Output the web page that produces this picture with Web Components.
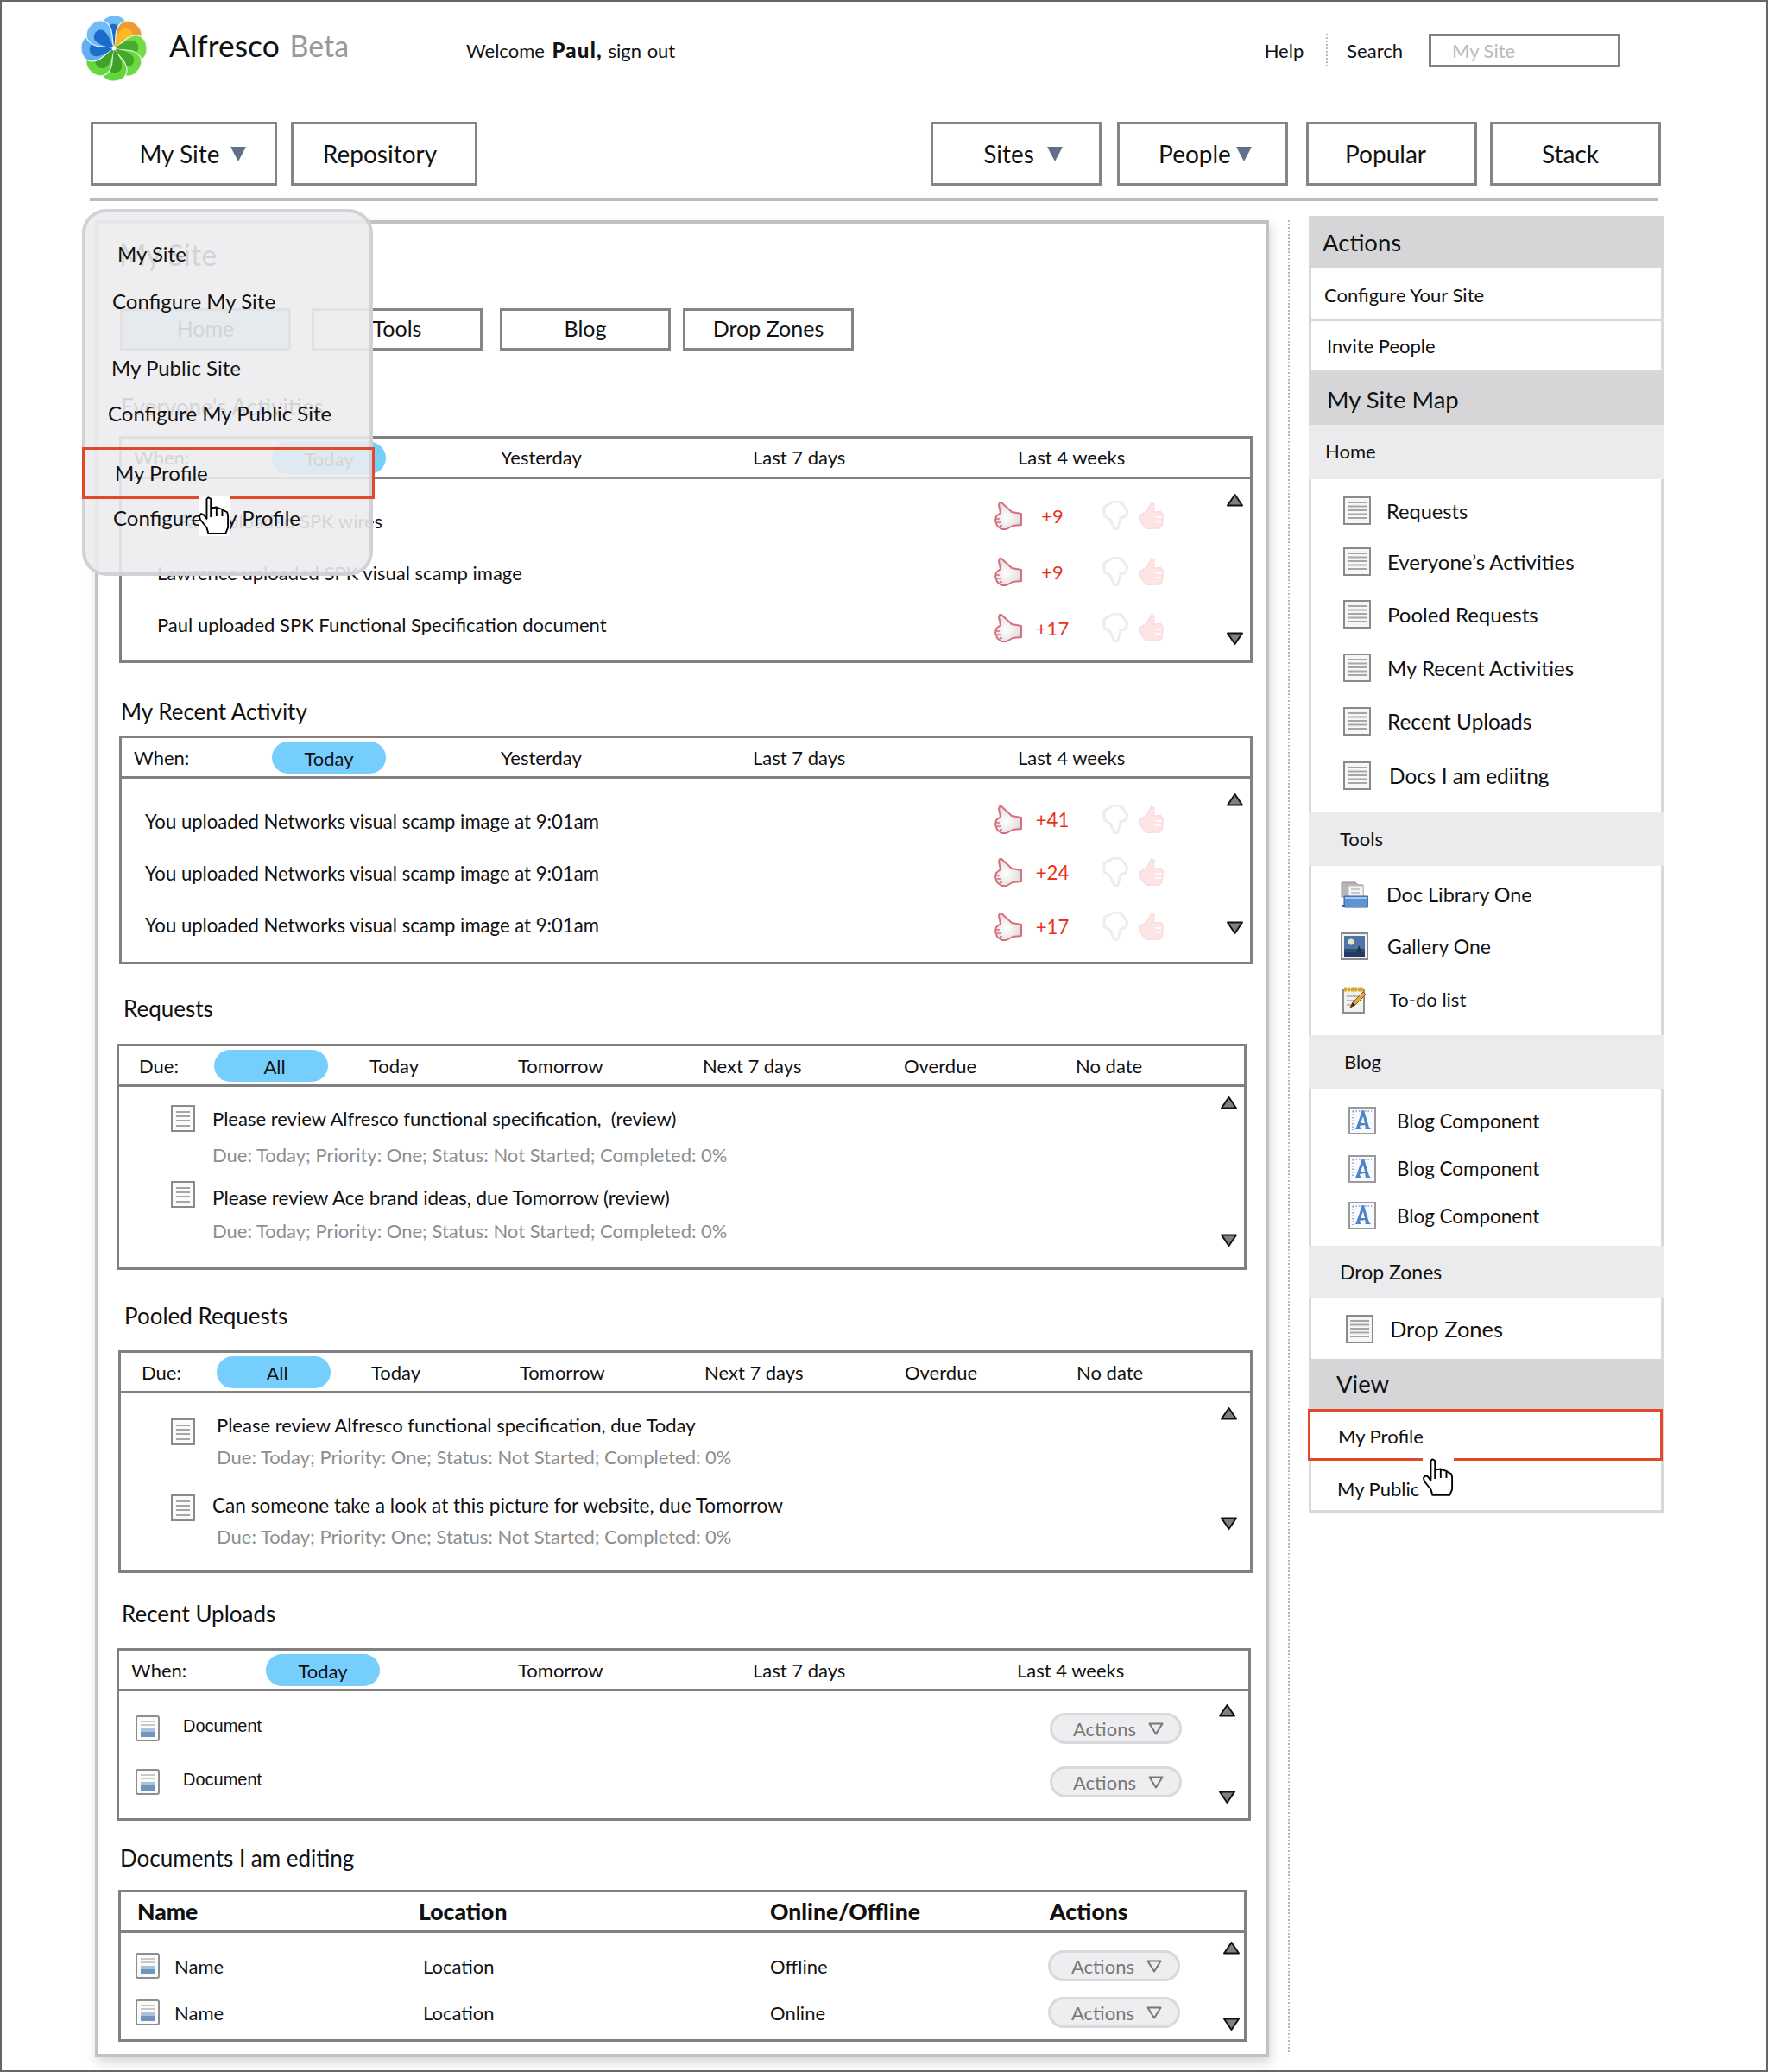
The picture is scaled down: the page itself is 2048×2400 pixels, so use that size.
<!DOCTYPE html>
<html>
<head>
<meta charset="utf-8">
<title>Alfresco My Site</title>
<style>
  html, body { margin: 0; background: #fff; }
  body { font-family: Lato, "Open Sans", sans-serif; font-size: 22px; color: #111; }
  .doc { font-family: "Liberation Sans", Arial, sans-serif; font-size: 20px; }
  .bold { font-weight: 900; font-size: 26.5px; }
</style>
</head>
<body>

<alfresco-page>
  <top-bar></top-bar>

  <main-nav>
    <nav-tab slot="left" label="My Site" arrow="12" shift="20" width="216"></nav-tab>
    <nav-tab slot="left" label="Repository" shift="-10" width="216"></nav-tab>
    <nav-tab slot="right" label="Sites" arrow="15" shift="16" width="198" style="margin-right:18px"></nav-tab>
    <nav-tab slot="right" label="People" arrow="6" shift="6" width="198" style="margin-right:21px"></nav-tab>
    <nav-tab slot="right" label="Popular" shift="-14" width="198" style="margin-right:15px"></nav-tab>
    <nav-tab slot="right" label="Stack" shift="-12" width="198"></nav-tab>
  </main-nav>

  <content-area>
    <main-panel>
      <section-title style="margin-top:16px;margin-left:24px;font-size:34px">My Site</section-title>

      <sub-tabs style="margin-top:42px;margin-left:25px">
        <sub-tab active>Home</sub-tab>
        <sub-tab>Tools</sub-tab>
        <sub-tab>Blog</sub-tab>
        <sub-tab>Drop Zones</sub-tab>
      </sub-tabs>

      <section-title style="margin-top:45px;margin-left:26px">Everyone's Activities</section-title>
      <list-box style="margin-top:14px;margin-left:24px;width:1313px;height:263px" arrows="16 17 8">
        <filter-bar slot="bar" label="When:" lift="2" pad="14" cols="160 265 292 307" items="Today|Yesterday|Last 7 days|Last 4 weeks"></filter-bar>
        <div style="height:18px"></div>
        <vote-row pad="64" vote-y="-12" score="+9">Paul uploaded SPK wires</vote-row>
        <vote-row pad="41" vote-y="-2" score="+9">Lawrence uploaded SPK visual scamp image</vote-row>
        <vote-row pad="41" vote-y="8" score="+17">Paul uploaded SPK Functional Specification document</vote-row>
      </list-box>

      <section-title style="margin-top:36px;margin-left:26px">My Recent Activity</section-title>
      <list-box style="margin-top:8px;margin-left:24px;width:1313px;height:265px" arrows="16 31 8">
        <filter-bar slot="bar" label="When:" pad="14" cols="160 265 292 307" items="Today|Yesterday|Last 7 days|Last 4 weeks"></filter-bar>
        <div style="height:19px"></div>
        <vote-row pad="27" vote-y="-4" score="+41" style="font-size:22.12px">You uploaded Networks visual scamp image at 9:01am</vote-row>
        <vote-row pad="27" vote-y="-2" score="+24" style="font-size:22.12px">You uploaded Networks visual scamp image at 9:01am</vote-row>
        <vote-row pad="27" vote-y="4" score="+17" style="font-size:22.12px">You uploaded Networks visual scamp image at 9:01am</vote-row>
      </list-box>

      <section-title style="margin-top:31px;margin-left:29px">Requests</section-title>
      <list-box style="margin-top:21px;margin-left:21px;width:1309px;height:262px" arrows="10 23 8">
        <filter-bar slot="bar" label="Due:" pad="23" cols="87 180 172 214 233 199" items="All|Today|Tomorrow|Next 7 days|Overdue|No date"></filter-bar>
        <div style="height:21px"></div>
        <task-row pad="60" title-top="-1" style="height:88px" meta="Due: Today; Priority: One; Status: Not Started; Completed: 0%">Please review Alfresco functional specification,&nbsp; (review)</task-row>
        <task-row pad="60" title-top="3" meta-top="0" style="height:88px;font-size:22.4px" meta="Due: Today; Priority: One; Status: Not Started; Completed: 0%">Please review Ace brand ideas, due Tomorrow (review)</task-row>
      </list-box>

      <section-title style="margin-top:33px;margin-left:30px">Pooled Requests</section-title>
      <list-box style="margin-top:20px;margin-left:23px;width:1314px;height:258px" arrows="15 46 15">
        <filter-bar slot="bar" label="Due:" pad="24" cols="87 179 172 214 232 199" items="All|Today|Tomorrow|Next 7 days|Overdue|No date"></filter-bar>
        <div style="height:29px"></div>
        <task-row pad="58" gap="25" title-top="-9" meta-top="-13" style="height:88px" meta="Due: Today; Priority: One; Status: Not Started; Completed: 0%">Please review Alfresco functional specification, due Today</task-row>
        <task-row pad="58" gap="20" meta-x="5" title-top="-4" meta-top="-9" style="height:88px;font-size:22.6px" meta="Due: Today; Priority: One; Status: Not Started; Completed: 0%">Can someone take a look at this picture for website, due Tomorrow</task-row>
      </list-box>

      <section-title style="margin-top:27px;margin-left:27px">Recent Uploads</section-title>
      <list-box style="margin-top:20px;margin-left:21px;width:1314px;height:200px" arrows="14 16 15">
        <filter-bar slot="bar" label="When:" pad="14" cols="156 292 272 306" items="Today|Tomorrow|Last 7 days|Last 4 weeks"></filter-bar>
        <div style="height:25px"></div>
        <table-line pad="19" cols="55 1004 160" style="height:36px;margin-bottom:26px">
          <ui-icon name="thumb"></ui-icon><span class="doc" style="margin-top:-6px">Document</span><action-pill></action-pill>
        </table-line>
        <table-line pad="19" cols="55 1004 160" style="height:36px">
          <ui-icon name="thumb"></ui-icon><span class="doc" style="margin-top:-6px">Document</span><action-pill></action-pill>
        </table-line>
      </list-box>

      <section-title style="margin-top:23px;margin-left:25px">Documents I am editing</section-title>
      <list-box style="margin-top:17px;margin-left:23px;width:1307px;height:176px" arrows="9 9 5">
        <table-line slot="bar" pad="19" cols="326 407 324 160" style="height:47px;border-bottom:3px solid #808080">
          <span class="bold">Name</span><span class="bold">Location</span><span class="bold">Online/Offline</span><span class="bold">Actions</span>
        </table-line>
        <div style="height:20px"></div>
        <table-line pad="17" cols="45 288 402 322 160" style="height:36px;margin-bottom:18px">
          <ui-icon name="thumb"></ui-icon><span>Name</span><span>Location</span><span>Offline</span><action-pill></action-pill>
        </table-line>
        <table-line pad="17" cols="45 288 402 322 160" style="height:36px">
          <ui-icon name="thumb"></ui-icon><span>Name</span><span>Location</span><span>Online</span><action-pill></action-pill>
        </table-line>
      </list-box>
    </main-panel>

    <side-panel>
      <side-head pad="16">Actions</side-head>
      <side-link pad="18" line style="height:62px;padding-top:4px">Configure Your Site</side-link>
      <side-link pad="21" line style="height:60px">Invite People</side-link>
      <side-head pad="21">My Site Map</side-head>
      <side-sub pad="19" style="height:63px">Home</side-sub>
      <div style="height:8px"></div>
      <side-link pad="40" icon="page" gap="18" style="height:57px;font-size:23.6px">Requests</side-link>
      <side-link pad="40" icon="page" gap="19" style="height:60px;font-size:24px">Everyone’s Activities</side-link>
      <side-link pad="40" icon="page" gap="19" style="height:62px;font-size:24px">Pooled Requests</side-link>
      <side-link pad="40" icon="page" gap="19" style="height:62px;font-size:24px">My Recent Activities</side-link>
      <side-link pad="40" icon="page" gap="19" style="height:63px;font-size:24.4px">Recent Uploads</side-link>
      <side-link pad="40" icon="page" gap="21" style="height:62px;font-size:24.4px">Docs I am ediitng</side-link>
      <div style="height:12px"></div>
      <side-sub pad="36" style="height:62px">Tools</side-sub>
      <div style="height:4px"></div>
      <side-link pad="37" icon="folder" gap="21" style="height:58px;font-size:23.4px">Doc Library One</side-link>
      <side-link pad="37" icon="gallery" gap="22" style="height:61px;font-size:23px">Gallery One</side-link>
      <side-link pad="39" icon="todo" gap="26" style="height:63px">To-do list</side-link>
      <div style="height:10px"></div>
      <side-sub pad="41" style="height:62px">Blog</side-sub>
      <div style="height:9px"></div>
      <side-link pad="46" icon="blog" gap="24" style="height:56px;font-size:22.4px">Blog Component</side-link>
      <side-link pad="46" icon="blog" gap="24" style="height:55px;font-size:22.4px">Blog Component</side-link>
      <side-link pad="46" icon="blog" gap="24" style="height:54px;font-size:22.4px">Blog Component</side-link>
      <div style="height:8px"></div>
      <side-sub pad="36" style="height:61px;font-size:23px">Drop Zones</side-sub>
      <side-link pad="43" icon="page" gap="19" style="height:70px;font-size:25.5px">Drop Zones</side-link>
      <side-head pad="32" style="height:58px;padding-bottom:2px">View</side-head>
      <side-link pad="29" hot style="height:60px;padding-top:2px">My Profile</side-link>
      <side-link pad="33" line style="height:60px;padding-top:8px">My Public</side-link>
    </side-panel>
  </content-area>

  <site-menu></site-menu>
  <hand-cursor style="left:228px;top:572px"></hand-cursor>
  <hand-cursor style="left:1646px;top:1686px"></hand-cursor>
</alfresco-page>

<script>
  // every small picture on the page lives here, drawn on a 1:1 pixel grid
  const ICONS = {
    page: [32, 33, `<rect x="1" y="1" width="30" height="31" fill="#f6f6f6" stroke="#8a8a8a" stroke-width="2"/>
      <path d="M5 7h22M5 11.500h22M5 16h22M5 20.500h22M5 25h22" stroke="#a6a6a6" stroke-width="2"/>`],
    task: [28, 31, `<rect x="1" y="1" width="26" height="29" fill="#fafafa" stroke="#8a8a8a" stroke-width="2"/>
      <path d="M6 8h16M6 13h16M6 18h16M6 24h16" stroke="#a6a6a6" stroke-width="2"/>`],
    thumb: [28, 30, `<rect x="1" y="1" width="26" height="28" rx="2" fill="#fbfbfb" stroke="#8d8d8d" stroke-width="2"/>
      <path d="M6 7h16M6 11h16" stroke="#c8c8c8" stroke-width="2"/>
      <rect x="6" y="15" width="16" height="10" fill="#6f94bd"/><rect x="6" y="15" width="16" height="4" fill="#a9c2dc"/>`],
    folder: [32, 32, `<path d="M1 2h16l3 3h6v14H1z" fill="#b5b5b5" stroke="#8a8a8a"/>
      <rect x="9" y="6" width="17" height="14" fill="#f3f3f3" stroke="#c4c4c4"/>
      <path d="M12 10h10M12 14h10" stroke="#c9c9c9" stroke-width="2"/>
      <rect x="4" y="18" width="28" height="13" rx="1" fill="#5f93d2" stroke="#2f5f9f"/>
      <path d="M5 20h26" stroke="#a8c8ee" stroke-width="2"/><rect x="1" y="28" width="4" height="3" fill="#2f5f9f"/>`],
    gallery: [32, 32, `<rect x="1" y="1" width="30" height="30" fill="#f2f2f2" stroke="#8a8a8a" stroke-width="2"/>
      <rect x="4" y="4" width="24" height="24" fill="#2f4a78"/><rect x="4" y="4" width="24" height="15" fill="#4e75a6"/>
      <circle cx="12" cy="11" r="3.500" fill="#dfeac4"/><path d="M18 24l3-9 4 9z" fill="#27303f"/>
      <rect x="4" y="23" width="24" height="5" fill="#223a63"/>`],
    todo: [28, 32, `<rect x="1" y="4" width="24" height="27" fill="#f1f1ee" stroke="#8f8f8f" stroke-width="2"/>
      <path d="M5 12h16M5 17h12M5 22h8" stroke="#bdbdbd" stroke-width="2"/>
      <path d="M2 4h22" stroke="#d8ad22" stroke-width="5" stroke-dasharray="3 1"/>
      <path d="M9 25l3-6 12-12 3 3-12 12z" fill="#e2a93c" stroke="#8a5a1c"/><path d="M9 25l3-6 3 3z" fill="#3a2a18"/>`],
    blog: [32, 32, `<rect x="1" y="1" width="30" height="30" fill="#f7f9fc" stroke="#9a9a9a" stroke-width="2"/>
      <path d="M5 5h22M5 5v22" stroke="#7f9cc4" stroke-width="1.500" stroke-dasharray="1.500 2"/>
      <path d="M8 26h7l-1-1-1-3 6-1 1 4-1 1h7l-2-2-6-20h-2L9 24zM14 19l3-8 2 8z" fill="#4f83c8" fill-rule="evenodd"/>`],
    vote: [32, 33, `<defs><radialGradient id="g" cx=".42" cy=".55" r=".6"><stop offset="0" stop-color="#fff"/><stop offset="1" stop-color="#dcdcdc"/></radialGradient></defs>
      <path d="M6 1L8 1L20 12L31 14V27L21 28L14 32H8L3 28L1 22L2 17L7 13L5 4Z" fill="url(#g)" stroke="#d96f7c" stroke-width="2" stroke-linejoin="round"/>
      <path d="M2 20h4M3 24h4M6 28h3" stroke="#d96f7c" stroke-width="1.500"/>`],
    down: [31, 34, `<path d="M3 7l11-6h8l8 11-2 6-6 2-3 12-4 1-5-11-7-5z" fill="#fff" stroke="#ececf1" stroke-width="3" stroke-linejoin="round"/>`],
    up: [30, 33, `<path d="M16 1l3 2-1 9h9l2 4-1 12-4 3H10l-8-9v-6l8-4z" fill="#fde5e5" stroke="#fcdede" stroke-width="2" stroke-linejoin="round"/>
      <path d="M20 18h8M20 23h7" stroke="#fff" stroke-width="1.500"/>`],
    'arrow-up': [19, 16, `<path d="M9.500 2L18 14.500H1z" fill="#808080" stroke="#111" stroke-width="2" stroke-linejoin="round"/>`],
    'arrow-down': [19, 16, `<path d="M9.500 14L18 1.500H1z" fill="#808080" stroke="#111" stroke-width="2" stroke-linejoin="round"/>`],
    'nav-arrow': [18, 17, `<path d="M0 0h18L9 17z" fill="#5f7189"/>`],
    'pill-arrow': [18, 15, `<path d="M1.500 1.500h15L9 13.500z" fill="none" stroke="#777" stroke-width="2" stroke-linejoin="round"/>`]
  }

  function drawIcon (name) {
    const [w, h, body] = ICONS[name]
    return `<svg width="${w}" height="${h}" viewBox="0 0 ${w} ${h}" style="display:block">${body}</svg>`
  }

  class UiIcon extends HTMLElement {
    constructor () {
      super()
      this.shadow = this.attachShadow({ mode: 'open' })
    }

    connectedCallback () {
      this.shadow.innerHTML = `<style>:host{display:block;flex:none}</style>${drawIcon(this.getAttribute('name'))}`
    }
  }

  class AlfrescoPage extends HTMLElement {
    constructor () {
      super()
      this.attachShadow({ mode: 'open' }).innerHTML = `
        <style>
          :host {
            display: block;
            position: relative;
            box-sizing: border-box;
            width: 2048px;
            height: 2400px;
            border: 2px solid #666;
            overflow: hidden;
          }
        </style>
        <slot></slot>`
    }
  }

  class FlowerLogo extends HTMLElement {
    constructor () {
      super()
      const petals = [
        [0, '#6fbcf7', '#1a6ccb'], [45, '#f09a34', '#fdb823'], [90, '#74dc44', '#46ad2c'], [135, '#6cd940', '#44a82b'],
        [180, '#64d53a', '#3da029'], [225, '#66d63c', '#3da12a'], [270, '#62aff2', '#1c6ecb'], [315, '#70baf7', '#1a6ccb']
      ]
      const paths = petals.map(([turn, light, dark]) => `
        <g transform="rotate(${turn})">
          <path d="M0 0C-3-8-15-14-15-25C-15-34-7-38 1-38C10-38 16-31 15-24C14-14 4-8 0 0Z" fill="${light}" stroke="#eef6f6" stroke-width="1.200"/>
          <path d="M0 0C-5-8-10-15-9-22C-8-27-3-29 1-28C5-27 7-23 6-18C5-11 2-6 0 0Z" fill="${dark}"/>
        </g>`).join('')
      this.attachShadow({ mode: 'open' }).innerHTML = `
        <style>:host{display:block;flex:none;width:80px;height:80px;margin:-4px 0 0 -1px}</style>
        <svg width="80" height="80" viewBox="-40 -40 80 80">${paths}<circle r="2.500" fill="#fff"/></svg>`
    }
  }

  class TopBar extends HTMLElement {
    constructor () {
      super()
      this.attachShadow({ mode: 'open' }).innerHTML = `
        <style>
          :host { display: flex; align-items: center; height: 112px; padding: 0 169px 0 91px; }
          .brand { display: flex; align-items: center; flex: none; width: 368px; }
          .name { margin-left: 24px; font-size: 35.5px; color: #111; white-space: nowrap; margin-top: -12px; }
          .name b { font-weight: 400; font-size: 34px; color: #999; margin-left: 3px; }
          .welcome { white-space: nowrap; margin-top: -2px; word-spacing: 1px; }
          .welcome strong { font-weight: 900; font-size: 24px; letter-spacing: 1.2px; margin: 0 0 0 2px; }
          .tools { margin-left: auto; display: flex; align-items: center; }
          .sep { width: 0; height: 38px; border-left: 2px dotted #bbb; margin: 0 22px 0 26px; }
          .field {
            box-sizing: border-box; width: 222px; height: 39px; margin-left: 30px;
            border: 3px solid #808080; padding: 0 24px; line-height: 33px; color: #bbb;
          }
        </style>
        <flower-logo></flower-logo>
        <div class="brand"><div class="name">Alfresco<b> Beta</b></div></div>
        <div class="welcome">Welcome <strong>Paul,</strong> sign out</div>
        <div class="tools">
          <span>Help</span><span class="sep"></span><span>Search</span>
          <div class="field">My Site</div>
        </div>`
    }
  }

  class MainNav extends HTMLElement {
    constructor () {
      super()
      this.attachShadow({ mode: 'open' }).innerHTML = `
        <style>
          :host { display: block; margin-top: 27px; padding: 0 0 0 103px; width: 1820px; }
          .tabs { display: flex; justify-content: space-between; }
          .group { display: flex; gap: 16px; }
          .group.right { gap: 0; margin-right: 1px; }
          .rule { height: 4px; background: #bcbcbc; margin: 14px 4px 0 -1px; }
        </style>
        <div class="tabs">
          <div class="group"><slot name="left"></slot></div>
          <div class="group right"><slot name="right"></slot></div>
        </div>
        <div class="rule"></div>`
    }
  }

  class NavTab extends HTMLElement {
    constructor () {
      super()
      this.shadow = this.attachShadow({ mode: 'open' })
    }

    connectedCallback () {
      const shift = Number(this.getAttribute('shift')) || 0
      const arrow = this.getAttribute('arrow')
      this.shadow.innerHTML = `
        <style>
          :host {
            display: flex; align-items: center; justify-content: center; box-sizing: border-box;
            width: ${this.getAttribute('width')}px; height: 74px; border: 3px solid #858585;
            font-size: 28px; padding-left: ${Math.max(shift, 0)}px; padding-right: ${Math.max(-shift, 0)}px;
          }
          span { white-space: nowrap; }
          svg { margin-left: ${arrow || 0}px; }
        </style>
        <span>${this.getAttribute('label')}</span>${arrow ? drawIcon('nav-arrow') : ''}`
    }
  }

  class ContentArea extends HTMLElement {
    constructor () {
      super()
      this.attachShadow({ mode: 'open' }).innerHTML = `
        <style>
          :host { display: flex; align-items: flex-start; margin-top: 17px; padding-left: 108px; position: relative; }
          .divider { width: 0; height: 2122px; margin: 5px 22px 0 22px; border-left: 2px dotted #b5b5b5; flex: none; }
          slot[name="side"] { display: block; }
        </style>
        <slot name="main"></slot>
        <div class="divider"></div>
        <slot name="side"></slot>`
      this.querySelector('main-panel').slot = 'main'
      this.querySelector('side-panel').slot = 'side'
    }
  }

  class MainPanel extends HTMLElement {
    constructor () {
      super()
      this.attachShadow({ mode: 'open' }).innerHTML = `
        <style>
          :host {
            display: block; box-sizing: border-box; flex: none; margin-top: 5px;
            width: 1360px; height: 2128px; border: 4px solid #c2c2c4;
            box-shadow: 2px 6px 12px rgba(0, 0, 0, .16);
            background: #fff;
          }
        </style>
        <slot></slot>`
    }
  }

  class SectionTitle extends HTMLElement {
    constructor () {
      super()
      this.attachShadow({ mode: 'open' }).innerHTML = `
        <style>:host { display: block; height: 40px; line-height: 40px; font-size: 26px; white-space: nowrap; }</style>
        <slot></slot>`
    }
  }

  class SubTabs extends HTMLElement {
    constructor () {
      super()
      this.attachShadow({ mode: 'open' }).innerHTML = `
        <style>:host { display: flex; gap: 24px; } ::slotted(:nth-child(3)) { margin-left: -4px; } ::slotted(:nth-child(4)) { margin-left: -10px; }</style>
        <slot></slot>`
    }
  }

  class SubTab extends HTMLElement {
    constructor () {
      super()
      this.attachShadow({ mode: 'open' }).innerHTML = `
        <style>
          :host {
            display: flex; align-items: center; justify-content: center; box-sizing: border-box;
            width: 198px; height: 49px; border: 3px solid #858585; font-size: 25px; padding-bottom: 3px;
          }
          :host([active]) { background: #a8d8f2; }
        </style>
        <slot></slot>`
    }
  }

  class ListBox extends HTMLElement {
    constructor () {
      super()
      this.shadow = this.attachShadow({ mode: 'open' })
    }

    connectedCallback () {
      const [top, bottom, right] = this.getAttribute('arrows').split(' ')
      this.shadow.innerHTML = `
        <style>
          :host {
            display: flex; flex-direction: column; box-sizing: border-box;
            border: 3px solid #808080; background: #fff;
          }
          .body { flex: 1; display: flex; min-height: 0; }
          .rows { flex: 1; min-width: 0; }
          .arrows {
            flex: none; display: flex; flex-direction: column; justify-content: space-between;
            padding: ${top}px ${right}px ${bottom}px 0;
          }
        </style>
        <slot name="bar"></slot>
        <div class="body">
          <div class="rows"><slot></slot></div>
          <div class="arrows">${drawIcon('arrow-up')}${drawIcon('arrow-down')}</div>
        </div>`
    }
  }

  class FilterBar extends HTMLElement {
    constructor () {
      super()
      this.shadow = this.attachShadow({ mode: 'open' })
    }

    connectedCallback () {
      const cols = this.getAttribute('cols').split(' ').map(c => c + 'px').join(' ')
      const items = this.getAttribute('items').split('|')
      this.shadow.innerHTML = `
        <style>
          :host {
            display: grid; align-items: center; box-sizing: border-box; height: 47px; flex: none;
            border-bottom: 3px solid #808080; padding-left: ${this.getAttribute('pad')}px;
            grid-template-columns: ${cols} auto;
          }
          span { white-space: nowrap; margin-top: -${this.getAttribute('lift') || 0}px; }
          .pill {
            box-sizing: border-box; width: 132px; height: 37px; line-height: 39px; text-align: center; margin-top: 0;
            background: #75cefc; border-radius: 19px;
          }
          .short { padding-left: 8px; }
        </style>
        <span>${this.getAttribute('label')}</span>
        ${items.map((item, i) => `<span class="${i === 0 ? 'pill' : ''} ${i === 0 && item.length < 4 ? 'short' : ''}">${item}</span>`).join('')}`
    }
  }

  class VoteRow extends HTMLElement {
    constructor () {
      super()
      this.shadow = this.attachShadow({ mode: 'open' })
    }

    connectedCallback () {
      this.shadow.innerHTML = `
        <style>
          :host {
            display: flex; align-items: center; box-sizing: border-box; height: 60px;
            padding: 0 73px 0 ${this.getAttribute('pad')}px;
          }
          .text { flex: 1; white-space: nowrap; }
          .score { width: 58px; margin-left: 6px; text-align: center; color: #e8321a; }
          .no { margin-left: 28px; }
          .yes { margin-left: 11px; filter: blur(.5px); }
          .votes { display: flex; align-items: center; margin-top: ${this.getAttribute('vote-y') || 0}px; }
        </style>
        <div class="text"><slot></slot></div>
        <div class="votes">
          ${drawIcon('vote')}<div class="score">${this.getAttribute('score')}</div>
          <div class="no">${drawIcon('down')}</div><div class="yes">${drawIcon('up')}</div>
        </div>`
    }
  }

  class TaskRow extends HTMLElement {
    constructor () {
      super()
      this.shadow = this.attachShadow({ mode: 'open' })
    }

    connectedCallback () {
      const gap = this.getAttribute('gap') || 20
      const titleTop = this.getAttribute('title-top') || 0
      const metaTop = this.getAttribute('meta-top') || 0
      const metaX = this.getAttribute('meta-x') || 0
      this.shadow.innerHTML = `
        <style>
          :host { display: block; box-sizing: border-box; padding-left: ${this.getAttribute('pad')}px; }
          .line { display: flex; gap: ${gap}px; height: 34px; }
          .title { white-space: nowrap; line-height: 34px; margin-top: ${titleTop}px; }
          .meta {
            margin: ${8 + Number(metaTop)}px 0 0 ${Number(gap) + 28 + Number(metaX)}px;
            font-size: 22px; line-height: 32px; color: #8e8e8e; white-space: nowrap;
          }
        </style>
        <div class="line">${drawIcon('task')}<div class="title"><slot></slot></div></div>
        <div class="meta">${this.getAttribute('meta')}</div>`
    }
  }

  class TableLine extends HTMLElement {
    constructor () {
      super()
      this.shadow = this.attachShadow({ mode: 'open' })
    }

    connectedCallback () {
      const cols = this.getAttribute('cols').split(' ').map(c => c + 'px').join(' ')
      this.shadow.innerHTML = `
        <style>
          :host {
            display: grid; align-items: center; box-sizing: border-box; flex: none;
            padding-left: ${this.getAttribute('pad')}px; grid-template-columns: ${cols};
          }
          ::slotted(span) { white-space: nowrap; }
        </style>
        <slot></slot>`
    }
  }

  class ActionPill extends HTMLElement {
    constructor () {
      super()
      this.attachShadow({ mode: 'open' }).innerHTML = `
        <style>
          :host {
            display: flex; align-items: center; box-sizing: border-box; width: 153px; height: 36px;
            padding-left: 24px; border: 3px solid #d9d9dd; border-radius: 18px;
            background: #eeeef0; color: #777;
          }
          svg { margin-left: 14px; }
        </style>
        <span>Actions</span>${drawIcon('pill-arrow')}`
    }
  }

  class SidePanel extends HTMLElement {
    constructor () {
      super()
      this.attachShadow({ mode: 'open' }).innerHTML = `
        <style>
          :host {
            display: block; width: 411px; flex: none; box-sizing: border-box;
            background:
              linear-gradient(#d8d8da, #d8d8da) left top / 3px 100% no-repeat,
              linear-gradient(#d8d8da, #d8d8da) right top / 3px 100% no-repeat;
          }
        </style>
        <slot></slot>`
    }
  }

  class SideHead extends HTMLElement {
    constructor () {
      super()
      this.shadow = this.attachShadow({ mode: 'open' })
    }

    connectedCallback () {
      this.shadow.innerHTML = `
        <style>
          :host {
            display: flex; align-items: center; box-sizing: border-box; height: 60px;
            padding-left: ${this.getAttribute('pad')}px; background: #d6d6d8; font-size: 27.5px;
          }
        </style>
        <slot></slot>`
    }
  }

  class SideSub extends HTMLElement {
    constructor () {
      super()
      this.shadow = this.attachShadow({ mode: 'open' })
    }

    connectedCallback () {
      this.shadow.innerHTML = `
        <style>
          :host {
            display: flex; align-items: center; box-sizing: border-box; padding-bottom: 2px;
            padding-left: ${this.getAttribute('pad')}px; background: #ebebee;
          }
        </style>
        <slot></slot>`
    }
  }

  class SideLink extends HTMLElement {
    constructor () {
      super()
      this.shadow = this.attachShadow({ mode: 'open' })
    }

    connectedCallback () {
      const icon = this.getAttribute('icon')
      this.shadow.innerHTML = `
        <style>
          :host {
            display: flex; align-items: center; box-sizing: border-box; white-space: nowrap;
            padding-left: ${this.getAttribute('pad')}px;
          }
          :host([line]) { border-bottom: 3px solid #d8d8da; }
          :host([hot]) { border: 3px solid #e0492a; padding-left: ${Number(this.getAttribute('pad')) + 3}px; margin: 0 1px 0 -1px; background: #fff; }
          svg { margin-right: ${this.getAttribute('gap') || 0}px; flex: none; }
        </style>
        ${icon ? drawIcon(icon) : ''}<slot></slot>`
    }
  }

  class SiteMenu extends HTMLElement {
    constructor () {
      super()
      const entries = [
        ['My Site', 37, 28], ['Configure My Site', 31, 15], ['My Public Site', 30, 37], ['Configure My Public Site', 26, 13]
      ]
      this.attachShadow({ mode: 'open' }).innerHTML = `
        <style>
          :host {
            position: absolute; left: 93px; top: 240px; box-sizing: border-box;
            width: 337px; height: 425px; border: 4px solid rgba(205, 205, 209, .85);
            border-radius: 28px; background: rgba(236, 236, 238, .89);
          }
          .item { height: 40px; line-height: 40px; white-space: nowrap; font-size: 24px; }
          .hot {
            box-sizing: border-box; height: 60px; width: 339px; margin: 19px 0 0 -4px;
            border: 3px solid #e0492a; padding-left: 35px; line-height: 54px; white-space: nowrap; font-size: 24px;
          }
        </style>
        ${entries.map(([text, left, top]) => `<div class="item" style="padding-left:${left}px;margin-top:${top}px">${text}</div>`).join('')}
        <div class="hot">My Profile</div>
        <div class="item" style="padding-left:32px;margin-top:2px">Configure My Profile</div>`
    }
  }

  class HandCursor extends HTMLElement {
    constructor () {
      super()
      this.attachShadow({ mode: 'open' }).innerHTML = `
        <style>:host { position: absolute; display: block; width: 36px; height: 47px; background: #fff; }</style>
        <svg width="36" height="47" viewBox="0 0 38 47">
          <path d="M10 3L12 1L15 3V14L22 13L24 14L29 15.500L31 17L35 19L36 23V38L33 45H12L10 38L2 28L1 24L3 21L6 22L10 27Z" fill="#fff" stroke="#000" stroke-width="2" stroke-linejoin="round"/>
          <path d="M15 14V25M22 13V24M29 16V24" fill="none" stroke="#000" stroke-width="2"/>
        </svg>`
    }
  }

  customElements.define('ui-icon', UiIcon)
  customElements.define('alfresco-page', AlfrescoPage)
  customElements.define('flower-logo', FlowerLogo)
  customElements.define('top-bar', TopBar)
  customElements.define('main-nav', MainNav)
  customElements.define('nav-tab', NavTab)
  customElements.define('content-area', ContentArea)
  customElements.define('main-panel', MainPanel)
  customElements.define('section-title', SectionTitle)
  customElements.define('sub-tabs', SubTabs)
  customElements.define('sub-tab', SubTab)
  customElements.define('list-box', ListBox)
  customElements.define('filter-bar', FilterBar)
  customElements.define('vote-row', VoteRow)
  customElements.define('task-row', TaskRow)
  customElements.define('table-line', TableLine)
  customElements.define('action-pill', ActionPill)
  customElements.define('side-panel', SidePanel)
  customElements.define('side-head', SideHead)
  customElements.define('side-sub', SideSub)
  customElements.define('side-link', SideLink)
  customElements.define('site-menu', SiteMenu)
  customElements.define('hand-cursor', HandCursor)
</script>
</body>
</html>
